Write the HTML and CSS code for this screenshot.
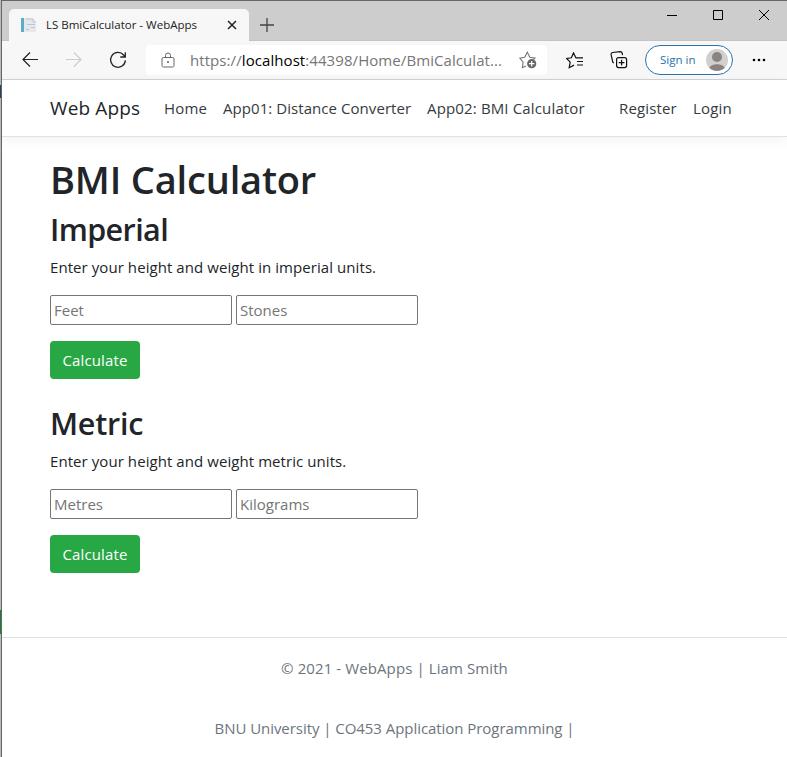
FILE: index.html
```
<!DOCTYPE html>
<html lang="en">
<head>
<meta charset="utf-8">
<title>LS BmiCalculator - WebApps</title>
<link rel="stylesheet" href="styles.css">
</head>
<body>
<div class="desktop">
<div class="window">
  <div class="tabstrip">
    <div class="tab">
      <svg class="favicon" width="16" height="16" viewBox="0 0 16 16"><path d="M0 1h3v14H0z" fill="#5eaccb"/><path d="M3 1h9l3 3v11H3z" fill="#e6e9ec"/><path d="M5 2h7v3h3M6 7.500h8M10 10.500h4M5 12.500h3" fill="none" stroke="#bcc3c9"/></svg>
      <span class="tab-title">LS BmiCalculator - WebApps</span>
      <svg class="tab-close" width="10" height="10" viewBox="0 0 10 10"><path d="M1 1l8 8M9 1l-8 8" stroke="#222" stroke-width="1.5"/></svg>
    </div>
    <svg class="new-tab" width="14" height="14" viewBox="0 0 14 14"><path d="M7 0v14M0 7h14" stroke="#444" stroke-width="1.3"/></svg>
    <div class="controls">
      <svg width="10" height="10" viewBox="0 0 10 10"><path d="M0 5.5h10" stroke="#000"/></svg>
      <svg width="10" height="10" viewBox="0 0 10 10"><path d="M.5.5h9v9h-9z" fill="none" stroke="#000"/></svg>
      <svg width="10" height="10" viewBox="0 0 10 10"><path d="M0 0l10 10M10 0L0 10" stroke="#000"/></svg>
    </div>
  </div>
  <div class="toolbar">
    <svg class="back" width="16" height="16" viewBox="0 0 16 16"><path d="M16 7.500H1M8 .5l-7 7 7 7" fill="none" stroke="#222" stroke-width="1.2"/></svg>
    <svg class="forward" width="16" height="16" viewBox="0 0 16 16"><path d="M0 7.500h15M8 .5l7 7-7 7" fill="none" stroke="#ccc" stroke-width="1.1"/></svg>
    <svg class="reload" width="18" height="18" viewBox="0 0 18 18"><path d="M16.4 9.4A7.4 7.4 0 1 1 14.6 4L16 6M16.3 1.2V6h-5" fill="none" stroke="#222" stroke-width="1.3"/></svg>
    <div class="address">
      <svg class="lock" width="14" height="16" viewBox="0 0 14 16"><path d="M2.5 5.500h9a1.500 1.500 0 0 1 1.500 1.500v6.500a1.500 1.500 0 0 1-1.500 1.500h-9A1.500 1.500 0 0 1 1 13.500V7a1.500 1.500 0 0 1 1.500-1.500zM4.500 5.500V3.500a2.500 2.500 0 0 1 5 0v2" fill="none" stroke="#666"/><circle cx="7" cy="10" r="1" fill="#666"/></svg>
      <span class="url">https://<b>localhost</b>:44398/Home/BmiCalculat...</span>
      <svg class="star-add" width="18" height="18" viewBox="0 0 18 18"><path d="M7 15l-3.600 1.500.7-5.300L.8 7.100l4.900-.8L8.300 1.200l2.500 5.100 5.200.8-1.500 1.500" fill="none" stroke="#777" stroke-width="1.1"/><circle cx="12.700" cy="12.700" r="4.600" fill="#666"/><path d="M12.700 10v5.400M10 12.700h5.400" stroke="#fff" stroke-width="1.2"/></svg>
    </div>
    <svg class="favorites" width="18" height="17" viewBox="0 0 18 17"><path d="M11 5.900H10L7.500.9 5.400 5.800l-4.800.7 3.600 3.700-1 5.500L8 13.100M11 5.900h6M11 9.500h6M11 13h6" fill="none" stroke="#111" stroke-width="1.2"/></svg>
    <svg class="collections" width="18" height="18" viewBox="0 0 18 18"><rect x="6.600" y="6.600" width="10" height="10" rx="2" fill="none" stroke="#111" stroke-width="1.200"/><path d="M11.600 8.800v5.600M8.800 11.600h5.600M3.800 12.100l-1-1L1.100 3.700a2 2 0 0 1 1.500-2.200l7.600-.9a2 2 0 0 1 2 1.600l.3 1.900" fill="none" stroke="#111" stroke-width="1.200"/></svg>
    <div class="signin"><span>Sign in</span><svg width="22" height="22" viewBox="0 0 22 22"><circle cx="11" cy="11" r="11" fill="#d2d0ce"/><circle cx="11" cy="8" r="5" fill="#8a8380"/><path d="M3.300 18.700C5 14 17 14 18.700 18.700A11 11 0 0 1 3.300 18.700z" fill="#8a8380"/></svg></div>
    <svg class="more" width="14" height="4" viewBox="0 0 14 4"><circle cx="2" cy="2" r="1.300"/><circle cx="7" cy="2" r="1.300"/><circle cx="12" cy="2" r="1.300"/></svg>
  </div>
  <nav class="navbar">
    <a class="brand">Web Apps</a>
    <a class="home">Home</a>
    <a class="app1">App01: Distance Converter</a>
    <a class="app2">App02: BMI Calculator</a>
    <a class="register">Register</a>
    <a class="login">Login</a>
  </nav>
  <main>
    <h1>BMI Calculator</h1>
    <section>
      <h2 class="imperial">Imperial</h2>
      <p>Enter your height and weight in imperial units.</p>
      <div class="fields"><input placeholder="Feet"><input placeholder="Stones"></div>
      <button>Calculate</button>
    </section>
    <section>
      <h2 class="metric">Metric</h2>
      <p>Enter your height and weight metric units.</p>
      <div class="fields"><input placeholder="Metres"><input placeholder="Kilograms"></div>
      <button>Calculate</button>
    </section>
  </main>
  <footer>
    <p class="copy">© 2021 - WebApps | Liam Smith</p>
    <p class="course">BNU University | CO453 Application Programming |</p>
  </footer>
</div>
</div>
</body>
</html>
```
FILE: styles.css
```
* { box-sizing: border-box; }
body { margin: 0; font: 15px/24px "Open Sans", "Noto Sans", sans-serif; color: #212529; background: #fff; overflow: hidden; }
svg { display: block; flex: none; }
a, span { white-space: nowrap; }
.desktop { height: 757px; padding-left: 1px; background: linear-gradient(#bbb 0 85px, #246 85px 98px, #bbb 98px 610px, #168334 610px 634px, #bbb 634px); }
.window { height: 757px; border-left: 1px solid #666; border-top: 1px solid #666; background: #fff; display: flex; flex-direction: column; }
.tabstrip { height: 40px; background: #cdcdcd; border-bottom: 1px solid #c4c4c4; display: flex; flex: none; padding-left: 7px; }
.tab { width: 240px; height: 32px; margin-top: 8px; border-radius: 5px 5px 0 0; background: #f7f7f7; display: flex; align-items: center; padding: 0 12px; }
.tab-title { margin-left: 9px; width: 151px; font-size: 11.5px; color: #222; }
.tab-close { margin-left: 30px; }
.new-tab { margin: 17px 0 0 11px; }
.controls { display: flex; gap: 36px; margin: 9px 18px 0 auto; }
.toolbar { height: 39px; flex: none; display: flex; align-items: center; background: #f7f7f7; border-bottom: 1px solid #d2d2d2; padding-left: 20px; }
.forward { margin-left: 28px; }
.reload { margin-left: 27px; }
.address { width: 401px; height: 30px; margin-left: 19px; background: #fff; border-radius: 4px; display: flex; align-items: center; }
.lock { margin-left: 15px; }
.url { margin-left: 15px; width: 312px; color: #767676; letter-spacing: .075px; }
.url b { font-weight: 400; color: #000; }
.star-add { margin-left: 17px; }
.favorites { margin-left: 19px; }
.collections { margin-left: 26px; }
.signin { width: 88px; height: 30px; margin-left: 17px; border: 1px solid #2a72ae; border-radius: 15px; background: #fff; display: flex; align-items: center; padding-left: 14px; color: #2670ad; font-size: 11.5px; }
.signin span { width: 36px; margin-right: 10px; }
.more { margin-left: 19px; }
.navbar { height: 57px; flex: none; border-bottom: 1px solid #dee2e6; box-shadow: 0 4px 12px rgba(0,0,0,.05); display: flex; align-items: center; padding-left: 48px; color: #343a40; }
.brand { width: 90px; font-size: 19px; color: #212529; letter-spacing: .12px; }
.home { width: 43px; margin-left: 24px; letter-spacing: .15px; }
.app1 { width: 188px; margin-left: 16px; letter-spacing: .06px; }
.app2 { width: 158px; margin-left: 16px; letter-spacing: .15px; }
.register { width: 58px; margin-left: 34px; letter-spacing: .15px; }
.login { margin-left: 16px; letter-spacing: .2px; }
main { height: 500px; flex: none; padding: 18px 48px 0; }
h1, h2, p { margin: 0; }
h1 { font-size: 38px; line-height: 48px; font-weight: 600; margin-bottom: 8px; letter-spacing: -.18px; }
h2 { font-size: 30.5px; line-height: 38px; font-weight: 600; margin-bottom: 7px; }
.imperial { letter-spacing: -.6px; }
.metric { letter-spacing: -.25px; }
main p { height: 24px; margin-bottom: 16px; letter-spacing: .07px; }
section { height: 195px; margin-top: -1px; }
.fields { display: flex; gap: 4px; height: 30px; margin-bottom: 16px; }
input { width: 182px; height: 30px; border: 1px solid #767676; border-radius: 2px; padding: 1px 3px; font: inherit; background: #fff; }
input::placeholder { color: #757575; opacity: 1; }
button { display: block; width: 90px; height: 38px; border: 0; border-radius: 4px; background: #28a745; color: #fff; font: inherit; letter-spacing: .12px; padding: 0; }
footer { border-top: 1px solid #dee2e6; padding-top: 18px; text-align: center; color: #6c757d; }
footer p { height: 24px; margin-bottom: 36px; }
.copy { letter-spacing: .1px; }
.course { letter-spacing: -.05px; }
```
